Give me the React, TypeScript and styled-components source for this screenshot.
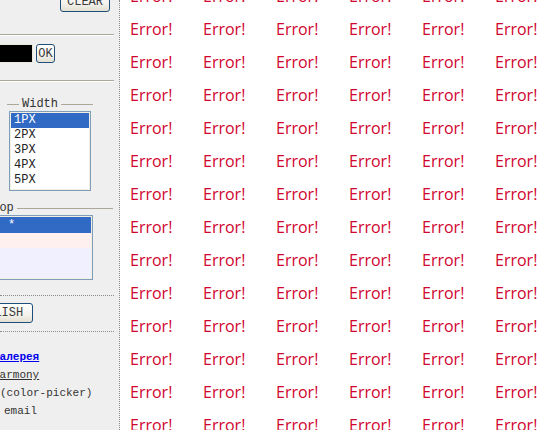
// Modules.
import React from "react";
import styled, { createGlobalStyle } from "styled-components";

// Style.
const GlobalStyle = createGlobalStyle`
  html, body {
    margin: 0;
    padding: 0;
    overflow: hidden;
    background: #fff;
  }
`;

const mono = `"Liberation Mono", "Courier New", monospace`;

// Styled.
const Page = styled.div`
  display: flex;
  width: 550px;
  height: 430px;
  overflow: hidden;
`;

const Sidebar = styled.aside`
  flex: none;
  width: 119px;
  border-right: 1px dotted #8c8c8c;
  background: #efefef;
  display: flex;
  flex-direction: column;
  overflow: hidden;
  font-family: ${mono};
  font-size: 12px;
  color: #000;
`;

const XpButton = styled.button<{ $width: number; $offset?: number }>`
  box-sizing: border-box;
  width: ${(p) => p.$width}px;
  height: 20px;
  margin: 0 0 0 ${(p) => p.$offset ?? 0}px;
  padding: 0;
  border: 1px solid #1f4e7a;
  border-radius: 3px;
  background: linear-gradient(#ffffff, #f3f2ec 60%, #e3e0d2);
  font-family: ${mono};
  font-size: 12px;
  color: #3a3a3a;
  flex: none;
`;

const TopBar = styled.div`
  display: flex;
  justify-content: flex-end;
  margin-top: -8px;
  padding-right: 9px;
`;

const Rule = styled.hr<{ $top: number }>`
  box-sizing: border-box;
  width: 114px;
  height: 2px;
  margin: ${(p) => p.$top}px 0 0 0;
  border: none;
  border-top: 1px solid #aca899;
  border-bottom: 1px solid #fff;
  flex: none;
`;

const DottedRule = styled.div<{ $top: number }>`
  width: 114px;
  height: 0;
  margin-top: ${(p) => p.$top}px;
  border-top: 1px dotted #8c8c8c;
  flex: none;
`;

const ColorRow = styled.div`
  display: flex;
  gap: 3px;
  margin-top: 8px;
`;

const ColorInput = styled.div`
  box-sizing: border-box;
  width: 60px;
  height: 19px;
  margin-left: -27px;
  background: #000;
  border: 1px solid #ebe8d9;
`;

const SmallButton = styled(XpButton)`
  height: 19px;
`;

const Group = styled.div<{ $left: number; $width: number; $top: number }>`
  flex: none;
  display: flex;
  flex-direction: column;
  margin: ${(p) => p.$top}px 0 0 ${(p) => p.$left}px;
  width: ${(p) => p.$width}px;
`;

const Legend = styled.div`
  display: flex;
  align-items: center;
  height: 14px;
  gap: 3px;

  &::before,
  &::after {
    content: "";
    height: 1px;
    background: #aca899;
  }
  &::before {
    width: 12px;
  }
  &::after {
    flex: 1;
  }
`;

const LegendText = styled.span`
  color: #333;
  line-height: 14px;
`;

const ListBox = styled.div<{ $width: number; $height: number; $left: number; $bg: string }>`
  box-sizing: border-box;
  width: ${(p) => p.$width}px;
  height: ${(p) => p.$height}px;
  margin-left: ${(p) => p.$left}px;
  border: 1px solid #7f9db9;
  padding: 1px;
  background: ${(p) => p.$bg};
  box-shadow: inset 0 0 0 1px #f1efe2;
  overflow: hidden;
`;

const Option = styled.div<{ $selected?: boolean; $tint?: string; $height?: number; $pad?: number }>`
  height: ${(p) => p.$height ?? 15}px;
  line-height: ${(p) => p.$height ?? 15}px;
  padding-left: ${(p) => p.$pad ?? 3}px;
  background: ${(p) => (p.$selected ? "#316ac5" : p.$tint ?? "transparent")};
  color: ${(p) => (p.$selected ? "#fff" : "#222")};
  white-space: nowrap;
`;

const PublishRow = styled.div`
  margin-top: 7px;
  display: flex;
`;

const Links = styled.div`
  margin: 16px 0 0 -7px;
  font-size: 11px;
  line-height: 18px;
  color: #333;
`;

const LinkLine = styled.div<{ $indent?: number }>`
  padding-left: ${(p) => p.$indent ?? 0}px;
  white-space: nowrap;
`;

const GalleryLink = styled.a`
  color: #0000ee;
  font-weight: bold;
  text-decoration: underline;
`;

const PlainLink = styled.a`
  color: #333;
  text-decoration: underline;
`;

const Canvas = styled.main`
  flex: 1;
  background: #fff;
  overflow: hidden;
`;

const ErrorGrid = styled.div`
  display: grid;
  grid-template-columns: repeat(6, 73px);
  grid-auto-rows: 33px;
  margin-top: -20px;
  padding-left: 10px;
`;

const ErrorCell = styled.span`
  font-family: "Open Sans", sans-serif;
  font-size: 16px;
  line-height: 33px;
  color: #d1042e;
  white-space: nowrap;
`;

const widths = ["1PX", "2PX", "3PX", "4PX", "5PX"];
const cells = Array.from({ length: 14 * 6 }, (_, i) => i);

const App: React.FC = () => {
  return (
    <Page>
      <GlobalStyle />
      <Sidebar>
        <TopBar>
          <XpButton $width={50}>CLEAR</XpButton>
        </TopBar>
        <Rule $top={22} />
        <ColorRow>
          <ColorInput />
          <SmallButton $width={19}>OK</SmallButton>
        </ColorRow>
        <Rule $top={17} />

        <Group $left={7} $width={86} $top={15}>
          <Legend>
            <LegendText>Width</LegendText>
          </Legend>
          <ListBox $width={82} $height={80} $left={2} $bg="#fff">
            {widths.map((w, i) => (
              <Option key={w} $selected={i === 0}>
                {w}
              </Option>
            ))}
          </ListBox>
        </Group>

        <Group $left={-30} $width={143} $top={10}>
          <Legend>
            <LegendText>Drop</LegendText>
          </Legend>
          <ListBox $width={123} $height={65} $left={0} $bg="#f0f0ff">
            <Option $selected $height={16} $pad={36}>
              *
            </Option>
            <Option $tint="#fff0f0" />
          </ListBox>
        </Group>

        <DottedRule $top={15} />
        <PublishRow>
          <XpButton $width={70} $offset={-37}>
            PUBLISH
          </XpButton>
        </PublishRow>
        <DottedRule $top={8} />

        <Links>
          <LinkLine>
            <GalleryLink href="#">Галерея</GalleryLink>
          </LinkLine>
          <LinkLine>
            <PlainLink href="#">Harmony</PlainLink>
          </LinkLine>
          <LinkLine $indent={7}>(color-picker)</LinkLine>
          <LinkLine $indent={11}>email</LinkLine>
        </Links>
      </Sidebar>

      <Canvas>
        <ErrorGrid>
          {cells.map((i) => (
            <ErrorCell key={i}>Error!</ErrorCell>
          ))}
        </ErrorGrid>
      </Canvas>
    </Page>
  );
};

export default App;
